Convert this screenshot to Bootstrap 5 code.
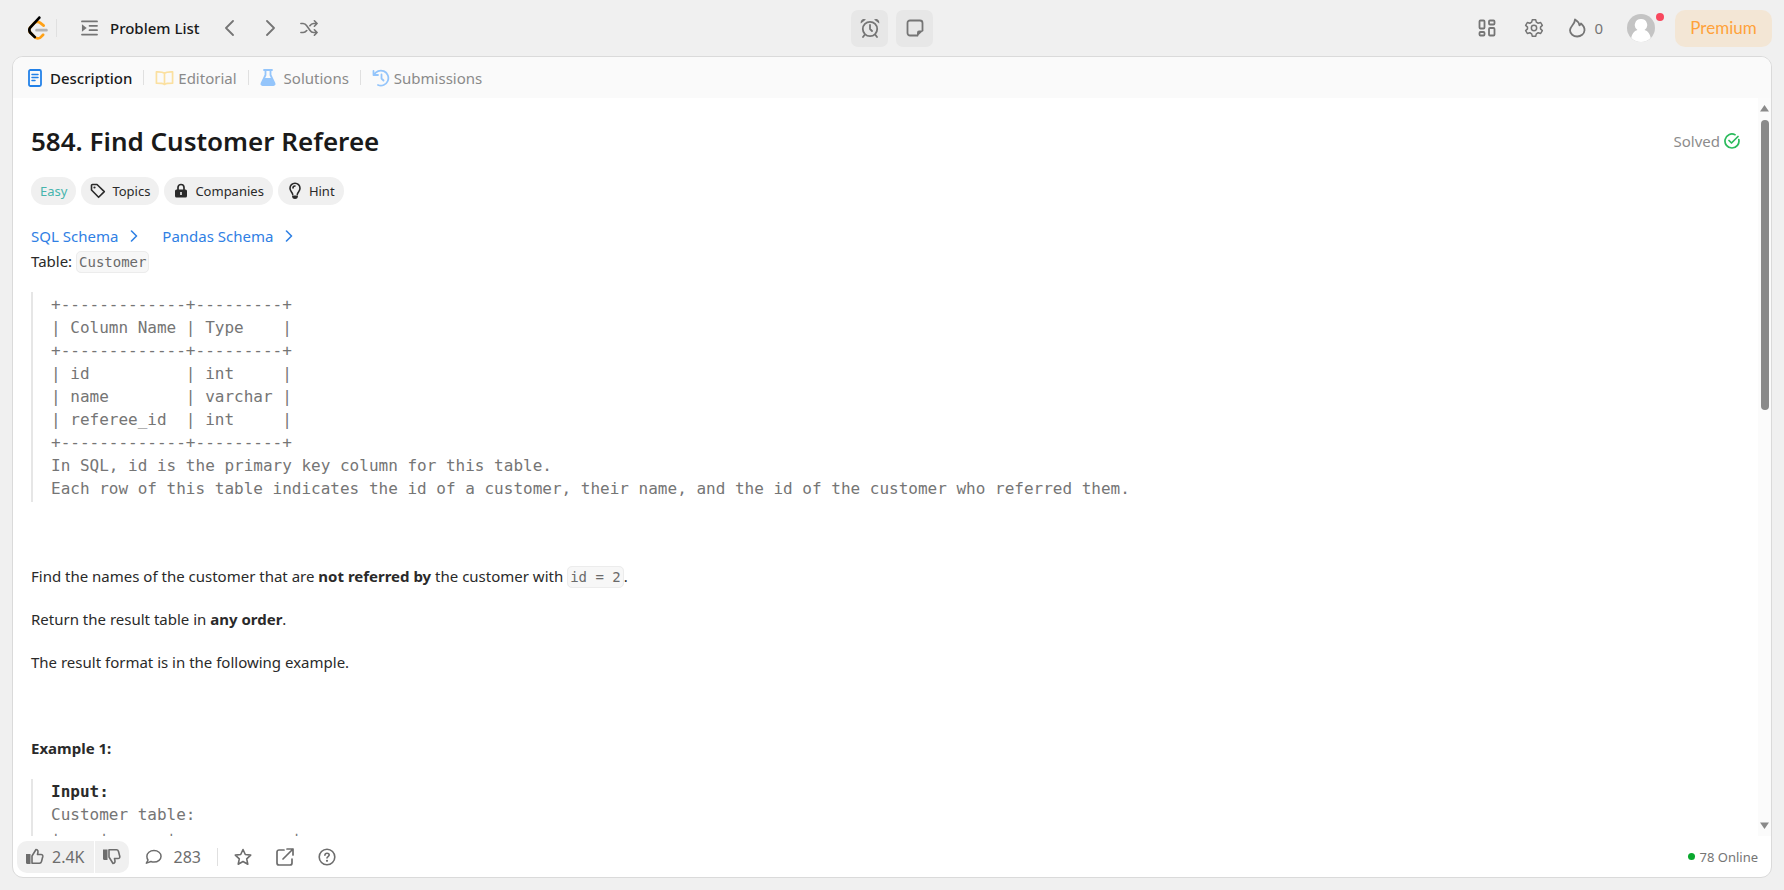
<!DOCTYPE html>
<html lang="en">
<head>
<meta charset="utf-8">
<meta name="viewport" content="width=device-width, initial-scale=1">
<title>584. Find Customer Referee</title>
<link href="https://cdn.jsdelivr.net/npm/bootstrap@5.3.0/dist/css/bootstrap.min.css" rel="stylesheet">
<style>
  :root { --ink: #2a2a2a; --chip: #f0f0f0; --link: #2f80e4; }
  body { background: #f0f0f0; color: var(--ink); font-family: "Noto Sans", "Open Sans", sans-serif; font-size: 15px; line-height: 24px; }
  svg { display: block; flex: none; fill: none; stroke: currentColor; stroke-width: 1.8; stroke-linecap: round; stroke-linejoin: round; }
  svg .solid { fill: currentColor; stroke: none; }
  button { border: 0; background: none; color: inherit; padding: 0; }
  a { text-decoration: none; color: inherit; }
  .topbar { height: 56px; padding: 0 12px; color: #757575; }
  .side { flex: 1 1 0; }
  .rule { width: 1px; height: 18px; background: #e0e0e0; }
  .tool { width: 37px; height: 37px; border-radius: 7px; background: #e7e7e7; }
  .listname { color: #1a1a1a; font-weight: 500; }
  .avatar { width: 28px; height: 28px; }
  .alertdot { width: 8px; height: 8px; background: #f8485e; top: -1px; right: -9px; }
  .premium { width: 97px; height: 37px; border-radius: 10px; background: #f3e6d5; color: #ffa23a; font-family: Lato, sans-serif; font-size: 17px; }
  .panel { margin: 0 12px 12px; border: 1px solid #dadada; border-radius: 11px; background: #fff; min-height: 0; }
  .tabs { height: 41px; padding: 0 15px; background: #fafafa; color: #8a8a8a; }
  .tabs .rule { height: 15px; margin: 0 11px; }
  .tabs a.current { color: #1a1a1a; font-weight: 500; }
  .scroller { min-height: 0; }
  .problem { padding: 25px 18px 0; min-width: 0; }
  h1 { font-size: 26px; line-height: 36px; font-weight: 600; color: #1a1a1a; }
  .solved { color: #8c8c8c; }
  .chips { gap: 5px; margin: 18px 0 19px; }
  .chip { height: 28px; padding: 0 9px; border-radius: 14px; background: var(--chip); font-size: 13px; gap: 6px; }
  .easy { color: #46b5ad; }
  .schema { color: var(--link); margin-bottom: 1px; }
  .problem p { margin: 0 0 19px; }
  .problem code { font: 14px/20px "DejaVu Sans Mono", monospace; color: #6a6a6a; background: #f7f7f7; border: 1px solid #ececec; border-radius: 5px; padding: 2px; }
  .listing { margin: 18px 0 19px; padding: 1px 0 2px 18px; border-left: 2px solid #e6e6e6; font: 16px/23px "DejaVu Sans Mono", monospace; color: #757575; overflow: hidden; }
  .listing strong { color: var(--ink); }
  .track { width: 13px; background: #fbfbfb; color: #8a8a8a; padding: 6px 0; }
  .thumb { width: 8px; height: 40%; border-radius: 4px; background: #8a8a8a; }
  .actions { height: 41px; padding: 0 13px 0 4px; color: #6d6d6d; font-size: 16px; }
  .vote { height: 32px; background: var(--chip); padding: 0 8px; }
  .vote.up { border-radius: 10px 0 0 10px; padding: 0 9px; }
  .vote.down { border-radius: 0 10px 10px 0; }
  .votes { gap: 1px; }
  .online { font-size: 13px; color: #757575; }
  .livedot { width: 7px; height: 7px; background: #0aa82e; }
</style>
</head>
<body>
<div class="d-flex flex-column vh-100">
  <header class="topbar d-flex align-items-center flex-shrink-0">
    <div class="side d-flex align-items-center">
      <a href="#" class="ms-3" aria-label="Home"><svg width="20" height="24" viewBox="0 0 95 111">
        <g stroke="none"><path fill="#ffa116" d="M67.5 83.07C70 80.58 74.04 80.58 76.52 83.08C79 85.58 79 89.62 76.5 92.11L65.43 103.17C55.2 113.37 38.56 113.5 28.17 103.5L8.2 83.96C-1.9 74-2.9 58 6.6 47.85L24.4 28.77C33.9 18.6 51.4 17.5 62.2 26.28L78.4 39.36C81.1 41.6 81.6 45.6 79.36 48.34C77.1 51 73.1 51.5 70.4 49.3L54.2 36.2C48.5 31.6 38.6 32.3 33.7 37.5L15.9 56.6C11.3 61.5 11.8 69.6 17.1 74.8L37 94.3C42.4 99.5 51.1 99.4 56.4 94.1Z"/><path fill="#b3b3b3" d="M40.6 72C37 72 34.2 69.1 34.2 65.6C34.2 62 37 59.2 40.6 59.2H87.6C91.1 59.2 94 62 94 65.6C94 69.1 91.1 72 87.6 72Z"/><path fill="#000" d="M49.4 2C51.8-.55 55.85-.7 58.4 1.7C61 4.1 61.1 8.2 58.7 10.75L15.9 56.57C11.3 61.55 11.8 69.6 17.1 74.8L36.9 94.2C39.4 96.7 39.5 100.7 37 103.2C34.5 105.8 30.5 105.8 28 103.3L8.2 83.96C-1.9 74-2.9 58 6.6 47.85Z"/></g></svg></a>
      <span class="rule ms-2"></span>
      <a href="#" class="d-flex align-items-center ms-4 me-4 gap-2"><svg class="me-1" width="17" height="18" viewBox="0 0 18 18"><path d="M1 2h16M9 6.700h8M9 11.300h8M1 16h16"/><path class="solid" d="M1 5l5 4-5 4z"/></svg><span class="listname">Problem List</span></a>
      <button type="button" aria-label="Previous"><svg width="10" height="18" viewBox="0 0 10 18"><path d="M9 2L2 9l7 7"/></svg></button>
      <button type="button" class="ms-4" aria-label="Next"><svg class="ms-2" width="10" height="18" viewBox="0 0 10 18"><path d="M1 2l7 7-7 7"/></svg></button>
      <button type="button" class="ms-4" aria-label="Shuffle"><svg width="18" height="18" viewBox="0 0 20 18"><path d="M1 4h2.500c2 0 3 1 4 2.500l3.500 5C12 13 13 14 15 14h4M1 14h2.500c2 0 3-1 4-2.200M11 6.500C12 5 13 4 15 4h4M16 1l3 3-3 3M16 11l3 3-3 3"/></svg></button>
    </div>
    <div class="d-flex gap-2">
      <button type="button" class="tool d-flex align-items-center justify-content-center" aria-label="Timer"><svg width="20" height="20" viewBox="0 0 20 20"><circle cx="10" cy="11" r="7.200"/><path d="M10 7v4l2 2M4.500 17L3 19M15.500 17l1.500 2"/><path class="solid" d="M.8 5.500C0 2 3.500 0 6 1.600zM19.200 5.500C20 2 16.500 0 14 1.600z"/></svg></button>
      <button type="button" class="tool d-flex align-items-center justify-content-center" aria-label="Notes"><svg width="18" height="18" viewBox="0 0 18 18"><path d="M11.500 16.500H4A2.500 2.500 0 0 1 1.500 14V4A2.500 2.500 0 0 1 4 1.500h10A2.500 2.500 0 0 1 16.500 4v7.500"/><path class="solid" d="M11 17.400v-4a2 2 0 0 1 2-2h4.400z"/></svg></button>
    </div>
    <div class="side d-flex align-items-center justify-content-end">
      <button type="button" aria-label="Layouts"><svg width="18" height="18" viewBox="0 0 18 18"><rect x="1.500" y="1.500" width="5" height="8" rx="1"/><rect x="11" y="1.500" width="5.500" height="4" rx="1"/><rect x="1.500" y="13" width="5" height="3.500" rx="1"/><rect x="11" y="9" width="5.500" height="7.500" rx="1"/></svg></button>
      <button type="button" class="ms-4" aria-label="Settings"><svg class="ms-1" width="20" height="20" viewBox="0 0 24 24"><path d="M10 2h4l.8 3 2.200 1.300 3-.9 2 3.500L19.800 11v2l2.200 2.100-2 3.500-3-.9-2.200 1.300-.8 3h-4l-.8-3L7 17.700l-3 .9-2-3.500L4.200 13v-2L2 8.900l2-3.500 3 .9L9.200 5z"/><circle cx="12" cy="12" r="3.200"/></svg></button>
      <a href="#" class="d-flex align-items-center gap-2 ms-4 me-4"><svg width="18" height="20" viewBox="0 0 18 20"><path d="M7 1.500c3.200 2 4.300 4 4.500 5.800.8-.4 1.200-1 1.500-1.800 2.500 2.200 3.800 4.300 3.500 7-.3 3.500-3.500 6-7.300 6s-7.200-2.600-7.200-6.300c0-4 5-5.700 5-10.700z"/></svg><span>0</span></a>
      <a href="#" class="position-relative me-3" aria-label="Profile"><svg class="avatar" viewBox="0 0 28 28"><g stroke="none"><circle cx="14" cy="14" r="14" fill="#c4c4c4"/><path fill="#fff" d="M14 5a6 6 0 0 1 3.500 11c3.500.8 5.800 4.500 6.200 8A14 14 0 0 1 4.300 24c.4-3.500 2.700-7.200 6.200-8A6 6 0 0 1 14 5z"/></g></svg><span class="alertdot rounded-circle position-absolute"></span></a>
      <button type="button" class="premium ms-1">Premium</button>
    </div>
  </header>

  <main class="panel flex-grow-1 d-flex flex-column overflow-hidden">
    <nav class="tabs d-flex align-items-center flex-shrink-0">
      <a href="#" class="current d-flex align-items-center gap-2"><svg width="14" height="18" viewBox="0 0 14 18" color="#2281e8"><rect x="1" y="1" width="12" height="16" rx="1.500"/><path stroke-width="1.500" d="M4 5.500h6M4 8.500h6M4 11.500h3"/></svg>Description</a>
      <span class="rule"></span>
      <a href="#" class="d-flex align-items-center gap-1"><svg width="19" height="16" viewBox="0 0 20 16" color="#fbe0a0"><path d="M10 3C8 1.300 6 1.500 1.500 1.500v12c4 0 6.500 0 8.500 1.300 2-1.300 4.500-1.300 8.500-1.300v-12C14 1.500 12 1.300 10 3zM10 3v11"/></svg>Editorial</a>
      <span class="rule"></span>
      <a href="#" class="d-flex align-items-center gap-2"><svg width="16" height="17" viewBox="0 0 16 17" color="#94c5fb"><path d="M4 1h8M5.500 1v5L1.500 14.500c-.3 1 0 1.500 1 1.500h11c1 0 1.300-.5 1-1.500L10.500 6V1"/><path class="solid" d="M4 9h8l3 6-1 1H2l-1-1z"/></svg>Solutions</a>
      <span class="rule"></span>
      <a href="#" class="d-flex align-items-center gap-1"><svg width="18" height="18" viewBox="0 0 18 18" color="#94c5fb"><path d="M1.500 2v4h4.500M2 6A7.500 7.500 0 1 1 6 16M9.500 5.500V9.500l2 2"/></svg>Submissions</a>
    </nav>

    <div class="scroller flex-grow-1 d-flex">
      <article class="problem flex-grow-1 overflow-hidden">
        <div class="d-flex align-items-center justify-content-between">
          <h1 class="m-0">584. Find Customer Referee</h1>
          <span class="solved d-flex align-items-center gap-1">Solved<svg width="16" height="16" viewBox="0 0 16 16" color="#2cbb5d"><path stroke-width="1.700" d="M14.800 6.500A7 7 0 1 1 11 1.700M5 7.500l2.500 2.500L14 3.500"/></svg></span>
        </div>
        <div class="d-flex chips">
          <span class="chip easy d-flex align-items-center">Easy</span>
          <button type="button" class="chip d-flex align-items-center"><svg width="16" height="16" viewBox="0 0 16 16"><path stroke-width="1.600" d="M1.500 2.500a1 1 0 0 1 1-1H7l7.300 7.100-5.700 5.700L1.500 7z"/><circle class="solid" cx="4.500" cy="4.500" r="1.100"/></svg>Topics</button>
          <button type="button" class="chip d-flex align-items-center"><svg width="16" height="16" viewBox="0 0 16 16"><path stroke-width="1.700" d="M5 7V4.500a3 3 0 0 1 6 0V7"/><path fill="currentColor" stroke="none" fill-rule="evenodd" d="M3.500 6.500h9A1.500 1.500 0 0 1 14 8v5a1.500 1.500 0 0 1-1.500 1.500h-9A1.500 1.500 0 0 1 2 13V8a1.500 1.500 0 0 1 1.500-1.500zM7.200 9v3h1.600V9z"/></svg>Companies</button>
          <button type="button" class="chip d-flex align-items-center"><svg width="16" height="18" viewBox="0 0 16 18"><path stroke-width="1.600" d="M5.700 12.500C5.500 10 3 9.500 3 6.200a5 5 0 0 1 10 0c0 3.300-2.500 3.800-2.700 6.300M6 6a2 2 0 0 1 2-2"/><path class="solid" d="M5 13.500h6c0 2.500-1 3.500-3 3.500s-3-1-3-3.500z"/></svg>Hint</button>
        </div>
        <div class="schema d-flex gap-4">
          <a href="#" class="d-flex align-items-center gap-2">SQL Schema<svg class="ms-1" width="8" height="12" viewBox="0 0 8 12"><path stroke-width="1.600" d="M1.500 1l5 5-5 5"/></svg></a>
          <a href="#" class="d-flex align-items-center gap-2">Pandas Schema<svg class="ms-1" width="8" height="12" viewBox="0 0 8 12"><path stroke-width="1.600" d="M1.500 1l5 5-5 5"/></svg></a>
        </div>
        <p>Table: <code>Customer</code></p>
<pre class="listing">+-------------+---------+
| Column Name | Type    |
+-------------+---------+
| id          | int     |
| name        | varchar |
| referee_id  | int     |
+-------------+---------+
In SQL, id is the primary key column for this table.
Each row of this table indicates the id of a customer, their name, and the id of the customer who referred them.</pre>
        <p>&nbsp;</p>
        <p>Find the names of the customer that are <strong>not referred by</strong> the customer with <code>id = 2</code>.</p>
        <p>Return the result table in <strong>any order</strong>.</p>
        <p>The result format is in the following example.</p>
        <p>&nbsp;</p>
        <p><strong>Example 1:</strong></p>
<pre class="listing"><strong>Input:</strong>
Customer table:
+----+------+------------+</pre>
      </article>
      <div class="track d-flex flex-column align-items-center flex-shrink-0" aria-hidden="true">
        <svg width="9" height="8" viewBox="0 0 9 8"><path class="solid" d="M4.500 1L9 7.500H0z"/></svg>
        <div class="thumb mt-2 mb-auto"></div>
        <svg width="9" height="8" viewBox="0 0 9 8"><path class="solid" d="M0 .5h9L4.500 7z"/></svg>
      </div>
    </div>

    <footer class="actions d-flex align-items-center flex-shrink-0">
      <div class="votes d-flex">
        <button type="button" class="vote up d-flex align-items-center gap-2"><svg width="18" height="17" viewBox="0 0 18 17"><path class="solid" d="M0 6h4.500v10H1.500A1.500 1.500 0 0 1 0 14.500z"/><path stroke-width="1.600" d="M6 8l4-6.500c2 .2 2.500 1.500 1.500 5H15c1.500 0 2 1 1.800 2l-1.300 5c-.3 1-1 1.700-2 1.700H6z"/></svg>2.4K</button>
        <button type="button" class="vote down d-flex align-items-center" aria-label="Dislike"><svg width="18" height="17" viewBox="0 0 18 17"><path class="solid" d="M0 1.500h4.500V12H1.500A1.500 1.500 0 0 1 0 10.500z"/><path stroke-width="1.600" d="M6 9l4 6.500c2-.2 2.500-1.500 1.500-5H15c1.500 0 2-1 1.800-2l-1.300-5c-.3-1-1-1.700-2-1.700H6z"/></svg></button>
      </div>
      <button type="button" class="d-flex align-items-center gap-2 ms-3"><svg class="me-1" width="17" height="16" viewBox="0 0 18 16"><path stroke-width="1.600" d="M9.500 1.200c4.300 0 7.500 2.700 7.500 6s-3.200 6.200-7.500 6.200c-1.200 0-2.200-.2-3.200-.6L1.500 14.500l1.700-3.300C2.300 10 2 8.700 2 7.200c0-3.300 3.200-6 7.500-6z"/></svg>283</button>
      <span class="rule ms-3 me-3"></span>
      <button type="button" aria-label="Favourite"><svg width="18" height="18" viewBox="0 0 18 18"><path stroke-width="1.600" d="M9 1.500l2.300 5 5.400.6-4 3.700 1.100 5.400L9 13.500l-4.800 2.700 1.100-5.400-4-3.700 5.400-.6z"/></svg></button>
      <button type="button" class="ms-4" aria-label="Share"><svg width="18" height="18" viewBox="0 0 18 18"><path stroke-width="1.700" d="M8 2H3a2 2 0 0 0-2 2v11a2 2 0 0 0 2 2h11a2 2 0 0 0 2-2v-4M11 1h6v6M17 1L7 11"/></svg></button>
      <button type="button" class="ms-4" aria-label="Help"><svg width="18" height="18" viewBox="0 0 18 18"><circle cx="9" cy="9" r="7.800" stroke-width="1.600"/><path stroke-width="1.600" d="M6.900 7.200C7 5.700 8 5.200 9 5.200c1.200 0 2.200.8 2.200 1.900C11.200 8.500 9 8.600 9 10"/><circle class="solid" cx="9" cy="12.800" r="1.100"/></svg></button>
      <span class="online ms-auto d-flex align-items-center gap-1"><span class="livedot rounded-circle"></span>78 Online</span>
    </footer>
  </main>
</div>
<script src="https://cdn.jsdelivr.net/npm/bootstrap@5.3.0/dist/js/bootstrap.bundle.min.js"></script>
</body>
</html>
